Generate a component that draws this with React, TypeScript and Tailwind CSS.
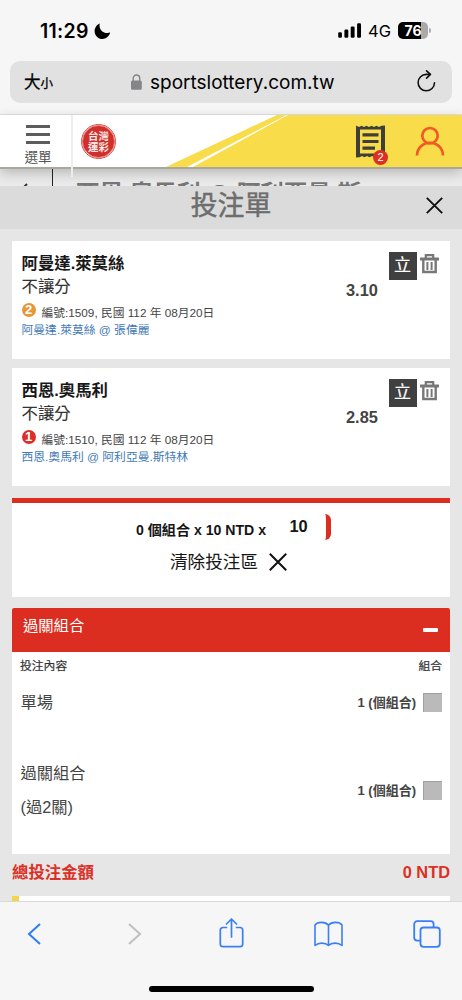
import React from "react";

type Bet = {
  player: string;
  pick: string;
  rank: string;
  rankClass: string;
  info: string;
  match: string;
  odds: string;
};

const bets: Bet[] = [
  {
    player: "阿曼達.萊莫絲",
    pick: "不讓分",
    rank: "2",
    rankClass: "bg-[#e8963a]",
    info: "編號:1509, 民國 112 年 08月20日",
    match: "阿曼達.萊莫絲 @ 張偉麗",
    odds: "3.10",
  },
  {
    player: "西恩.奧馬利",
    pick: "不讓分",
    rank: "1",
    rankClass: "bg-[#da2f2b]",
    info: "編號:1510, 民國 112 年 08月20日",
    match: "西恩.奧馬利 @ 阿利亞曼.斯特林",
    odds: "2.85",
  },
];

function StatusBar() {
  return (
    <div className="flex h-[61px] items-start pl-[40px] pr-[31px] font-['Inter',sans-serif] text-black">
      <span className="mt-[19px] w-[49px] whitespace-nowrap text-[19.5px] font-semibold leading-[24px] tracking-[0.3px]">11:29</span>
      <svg className="ml-[5px] mt-[23px]" width="17" height="17" viewBox="0 0 17 17">
        <path d="M5.7 0.4C4.4 6.2 9.4 11.6 16.2 9.6C15 13.7 11.8 16 8.5 16C4.2 16 0.6 12.4 0.6 8.2C0.6 4.8 2.8 1.6 5.7 0.4Z" fill="#000" />
      </svg>
      <div className="flex-1" />
      <svg className="mt-[23px]" width="24" height="16" viewBox="0 0 24 16">
        <rect x="0.2" y="9.3" width="3.7" height="5.5" rx="1.2" />
        <rect x="6.4" y="6.6" width="3.9" height="8.2" rx="1.2" />
        <rect x="12.7" y="3.5" width="3.9" height="11.3" rx="1.2" />
        <rect x="19.1" y="0.3" width="3.9" height="14.5" rx="1.2" />
      </svg>
      <span className="ml-[6px] mt-[19px] w-[24px] whitespace-nowrap text-[16.5px] leading-[24px]">4G</span>
      <div className="ml-[6px] mt-[22px] flex">
        <div className="flex h-[17px] w-[30px] items-center justify-center overflow-hidden rounded-[5px] bg-[linear-gradient(90deg,#000_23px,#aaa_23px)] text-[14px] font-bold leading-[17px] text-white">76</div>
        <div className="ml-[1px] mt-[6px] h-[5px] w-[2px] rounded-r-full bg-[#aaa]" />
      </div>
    </div>
  );
}

function AddressBar() {
  return (
    <div className="mx-[10px] flex h-[42px] items-center rounded-[10px] bg-[#e1e1e1] font-['Inter',sans-serif] text-black">
      <div className="ml-[14px] flex w-[107px] items-baseline font-['Noto_Sans_CJK_TC',sans-serif] font-normal leading-[20px] [-webkit-text-stroke:0.3px_#000]">
        <span className="text-[16.5px]">大</span>
        <span className="text-[12.5px]">小</span>
      </div>
      <svg width="11" height="16" viewBox="0 0 11 16" className="-mt-[1px]">
        <path d="M2.2 7V4.2a3.2 3.2 0 0 1 6.5 0V7" fill="none" stroke="#858588" strokeWidth="1.4" />
        <rect x="0" y="6.5" width="10.8" height="9.3" rx="1.6" fill="#858588" />
      </svg>
      <span className="ml-[8px] mt-[2px] w-[185px] whitespace-nowrap text-[19px] leading-[26px]">sportslottery.com.tw</span>
      <svg className="ml-[82px] -mt-[2px]" width="19" height="22" viewBox="0 0 19 22" fill="none" stroke="#111" strokeWidth="1.6" strokeLinecap="round" strokeLinejoin="round">
        <path d="M17.5 12.7a8.2 8.2 0 1 1-8.1-8.3h3.8" />
        <path d="M9.6 0.9l3.8 3.5-3.8 3.7" />
      </svg>
    </div>
  );
}

function SiteHeader() {
  return (
    <header className="relative z-10 h-[54px] border-b-2 border-[#a9a79e] bg-white shadow-[0_4px_12px_rgba(0,0,0,0.22)]">
      <svg className="absolute left-0 top-0" width="462" height="52" viewBox="0 0 462 52">
        <path d="M166 52L277 0H462V52Z" fill="#f8dc4a" />
        <path d="M187 52L286.5 0H288L193 52Z" fill="#fff" />
      </svg>
      <div className="absolute left-[71px] top-0 h-[62px] w-[2px] bg-[#eee]" />
      <div className="relative flex h-[52px]">
        <div className="flex w-[72px] flex-col items-center pl-[4px] pt-[10px]">
          <div className="flex flex-col gap-[5px]">
            <div className="h-[3px] w-[24px] bg-[#5c5c5c]" />
            <div className="h-[3px] w-[24px] bg-[#5c5c5c]" />
            <div className="h-[3px] w-[24px] bg-[#5c5c5c]" />
          </div>
          <span className="mt-[5px] text-[13.6px] leading-[18px] text-[#555]">選單</span>
        </div>
        <div className="ml-[9px] mt-[9px] flex h-[35px] w-[35px] items-center justify-center rounded-full border border-[#d94b45] bg-white">
          <div className="flex h-[33px] w-[33px] flex-col items-center justify-center rounded-full border border-[#e8817c] bg-[#cf302b] text-[10.5px] font-bold leading-[10.5px] text-[#fbe9e8]">
            <span>台灣</span>
            <span>運彩</span>
          </div>
        </div>
        <div className="relative ml-[240px] mt-[10px] h-[36px] w-[34px]">
          <svg width="29" height="33" viewBox="0 0 29 33">
            <path d="M0 0.5L3 2 5.5 0.7 8 2 10.5 0.7 13 2 15.5 0.7 18 2 20.5 0.7 23 2 25.5 0.7 29 0.5V32.5L26 31 23.5 32.3 21 31 18.5 32.3 16 31 13.5 32.3 11 31 8.5 32.3 6 31 3.5 32.3 0 32.5Z" fill="#3f3f3a" />
            <path d="M4 4.5H25V28.5H4Z" fill="#f8dc4a" />
            <path d="M6.5 9.8H22.5M6.5 16.5H22.5M6.5 23.2H19" stroke="#3f3f3a" strokeWidth="3.2" />
          </svg>
          <span className="absolute left-[17px] top-[24.5px] flex h-[15px] w-[15px] items-center justify-center rounded-full bg-[#dc3025] text-[11px] leading-[15px] text-white">2</span>
        </div>
        <svg className="ml-[25px] mt-[11px]" width="30" height="31" viewBox="0 0 30 31" fill="none" stroke="#f15a24" strokeWidth="2.7">
          <circle cx="15" cy="9.7" r="7.7" />
          <path d="M2 29.5C2.5 12.5 27.5 12.5 28 29.5" />
        </svg>
      </div>
    </header>
  );
}

function Trash() {
  return (
    <svg className="mt-[3px]" width="19" height="20" viewBox="0 0 19 20" fill="none" stroke="#777">
      <path d="M0 5H19" strokeWidth="3" />
      <path d="M5.8 4.5V1.2H13.2V4.5" strokeWidth="2.2" />
      <path d="M3.3 6V18H15.7V6" strokeWidth="2.4" />
      <path d="M7.4 8V16M11.6 8V16" strokeWidth="2" />
    </svg>
  );
}

function BetCard({ bet }: { bet: Bet }) {
  return (
    <section className="flex h-[118px] bg-white pl-[9.5px]">
      <div className="w-[324.5px] whitespace-nowrap pt-[11px]">
        <div className="text-[16.4px] font-bold leading-[22px] text-[#181818]">{bet.player}</div>
        <div className="pt-[1px] text-[16.4px] leading-[22px] text-[#333] [-webkit-text-stroke:0.12px_#333]">{bet.pick}</div>
        <div className="mt-[6px] flex h-[19px]">
          <span className={`mr-[6px] flex h-[14px] w-[14px] items-center justify-center rounded-full text-[13px] font-bold leading-[14px] text-white ${bet.rankClass}`}>{bet.rank}</span>
          <span className="text-[11.75px] leading-[20px] text-[#444]">{bet.info}</span>
        </div>
        <div className="text-[11.8px] leading-[16px] text-[#4279b5]">{bet.match}</div>
      </div>
      <div className="w-[42.5px] pt-[38px] text-[16.4px] font-bold leading-[22px] text-[#444]">{bet.odds}</div>
      <div className="mt-[11px] flex h-[28px] w-[28px] items-center justify-center bg-[#404040] text-[17px] leading-[28px] text-white [-webkit-text-stroke:0.2px_#fff]">立</div>
      <div className="ml-[3.5px] mt-[10px]">
        <Trash />
      </div>
    </section>
  );
}

function Betslip() {
  return (
    <main className="flex flex-col px-[12px]">
      <div className="mt-[12px] flex flex-col gap-[9px]">
        {bets.map((bet) => (
          <BetCard key={bet.info} bet={bet} />
        ))}
      </div>

      <section className="mt-[12px] flex h-[99px] flex-col border-t-[5px] border-[#db2e20] bg-white text-[#161616]">
        <div className="mt-[11px] flex h-[28px] whitespace-nowrap pl-[124px]">
          <span className="w-[135px] pt-[3px] text-[14.1px] font-bold leading-[26px]">0 個組合 x 10 NTD x</span>
          <div className="flex h-[26px] w-[60px] justify-center rounded-[6px] border-r-[5px] border-[#db2e20] text-[16.4px] font-bold leading-[25px]">10</div>
        </div>
        <div className="mt-[7px] flex items-center pl-[158px]">
          <span className="text-[17.6px] leading-[26px]">清除投注區</span>
          <svg className="-mt-[1px] ml-[11.5px]" width="18" height="18" viewBox="0 0 18 18" stroke="#111" strokeWidth="2">
            <path d="M0.8 0.8L17.2 17.2M17.2 0.8L0.8 17.2" />
          </svg>
        </div>
      </section>

      <section className="mt-[11px] h-[246px] rounded-t-[2px] bg-white">
        <div className="flex h-[44px] justify-between rounded-t-[2px] bg-[#db2e20] pl-[11px] pr-[12px]">
          <span className="pt-[5px] text-[15.3px] leading-[26px] text-white">過關組合</span>
          <div className="mt-[20px] h-[4px] w-[15px] rounded-[1px] bg-white" />
        </div>
        <div className="flex h-[28px] justify-between px-[8px] text-[11.8px] leading-[28px] text-[#333] [-webkit-text-stroke:0.2px_#333]">
          <span>投注內容</span>
          <span>組合</span>
        </div>
        <div className="flex h-[45px] items-center justify-between pl-[8.5px] pr-[8px] text-[#444]">
          <span className="text-[16.3px]">單場</span>
          <div className="flex items-center gap-[7px] text-[13px] font-bold">
            <span>1 (個組合)</span>
            <span className="h-[19px] w-[19px] border-l border-t border-[#a0a0a0] bg-[#bababa]" />
          </div>
        </div>
        <div className="mt-[30px] flex h-[71px] items-center justify-between pl-[8.5px] pr-[8px] text-[#444]">
          <div className="-mt-[1px] text-[16.3px] leading-[34px]">
            <div>過關組合</div>
            <div>(過2關)</div>
          </div>
          <div className="flex items-center gap-[7px] text-[13px] font-bold">
            <span>1 (個組合)</span>
            <span className="h-[19px] w-[19px] border-l border-t border-[#a0a0a0] bg-[#bababa]" />
          </div>
        </div>
      </section>

      <div className="flex h-[42px] justify-between text-[16.4px] font-bold leading-[36px] text-[#dc3025]">
        <span>總投注金額</span>
        <span>0 NTD</span>
      </div>
      <div className="h-[5px] border-l-[7px] border-[#f5d548] bg-white" />
    </main>
  );
}

function BrowserToolbar() {
  return (
    <footer className="flex h-[99px] flex-col items-center border-t border-[#d8d8d8] bg-[#f6f6f6]">
      <div className="flex h-[64px] w-full items-center pl-[27px]">
        <svg width="14" height="24" viewBox="0 0 14 24" fill="none" stroke="#2f7cf6" strokeWidth="2">
          <path d="M13 2L2 12L13 22" />
        </svg>
        <svg className="ml-[87px]" width="14" height="24" viewBox="0 0 14 24" fill="none" stroke="#bfbfbf" strokeWidth="2">
          <path d="M1 2L12 12L1 22" />
        </svg>
        <svg className="-mt-[3px] ml-[77px]" width="25" height="30" viewBox="0 0 25 30" fill="none" stroke="#3b7ff5" strokeWidth="1.7" strokeLinecap="round" strokeLinejoin="round">
          <path d="M7.5 9.5H4A2.7 2.7 0 0 0 1.3 12.2V26A2.7 2.7 0 0 0 4 28.7H21A2.7 2.7 0 0 0 23.7 26V12.2A2.7 2.7 0 0 0 21 9.5H17.5" />
          <path d="M12.5 19V1.3M7.5 6L12.5 1L17.5 6" />
        </svg>
        <svg className="ml-[70px]" width="29" height="26" viewBox="0 0 29 26" fill="none" stroke="#3b7ff5" strokeWidth="1.6" strokeLinejoin="round">
          <path d="M14.5 4.2C11.5 0.5 3.5 0.5 1 4V24.5C4.5 21.3 11.5 21.3 14.5 24.5C17.5 21.3 24.5 21.3 28 24.5V4C25.5 0.5 17.5 0.5 14.5 4.2ZM14.5 4.2V24.5" />
        </svg>
        <svg className="ml-[70px]" width="28" height="28" viewBox="0 0 28 28" fill="none" stroke="#3b7ff5" strokeWidth="1.8">
          <path d="M7.3 20.6H4.2A3 3 0 0 1 1.2 17.6V4.2A3 3 0 0 1 4.2 1.2H17.6A3 3 0 0 1 20.6 4.2V7.3" />
          <rect x="7.5" y="7.5" width="19.3" height="19.3" rx="3" />
        </svg>
      </div>
      <div className="mt-[20px] h-[6px] w-[165px] rounded-full bg-black" />
    </footer>
  );
}

export default function App() {
  return (
    <div className="h-[1000px] w-[462px] overflow-hidden bg-[#e6e6e6] font-['Liberation_Sans','Noto_Sans_CJK_TC',sans-serif]">
      <div className="flex h-[115px] flex-col border-b border-[#e3e3e3] bg-[#f6f6f6]">
        <StatusBar />
        <AddressBar />
      </div>
      <SiteHeader />
      <div className="flex h-[17px] overflow-hidden bg-[#ebebeb]">
        <svg width="52" height="17" viewBox="0 0 52 17" fill="none" stroke="#333" strokeWidth="2">
          <path d="M27 15L20 22H40" />
        </svg>
        <div className="relative z-20 w-px bg-[#222]" />
        <span className="ml-[23px] mt-[12px] whitespace-nowrap text-[23.6px] font-bold leading-[26px] text-[#777]">西恩.奧馬利 @ 阿利亞曼.斯</span>
      </div>
      <div className="relative flex h-[43px] items-center justify-center bg-[#dbdbdb] text-[#6d6d6d]">
        <h1 className="-mt-[4px] text-[26.8px] leading-[36px] [-webkit-text-stroke:0.5px_#6d6d6d]">投注單</h1>
        <svg className="absolute right-[19px] top-[11px]" width="17" height="17" viewBox="0 0 17 17" stroke="#111" strokeWidth="1.9">
          <path d="M0.8 0.8L16.2 16.2M16.2 0.8L0.8 16.2" />
        </svg>
      </div>
      <Betslip />
      <BrowserToolbar />
    </div>
  );
}
